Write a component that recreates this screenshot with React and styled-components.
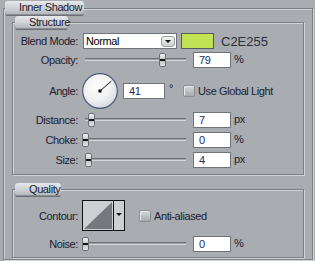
import styled, { createGlobalStyle } from 'styled-components'

const GlobalStyle = createGlobalStyle`
  html, body {
    margin: 0;
    background: #a9acb0;
  }

  body {
    width: 315px;
    height: 261px;
    overflow: hidden;
    font-family: "Liberation Sans", Arial, sans-serif;
    font-size: 11px;
    letter-spacing: -0.4px;
    color: #1a2030;
  }
`

const sliders = {
  opacity: { value: 79, max: 100 },
  distance: { value: 7, max: 120 },
  choke: { value: 0, max: 100 },
  size: { value: 4, max: 130 },
  noise: { value: 0, max: 100 },
}

const Dial = ({ angle }) => {
  const rad = (angle * Math.PI) / 180
  const x = 18 + 15 * Math.cos(rad)
  const y = 18 - 15 * Math.sin(rad)

  return (
    <DialBox width='36' height='36' viewBox='0 0 36 36'>
      <defs>
        <radialGradient id='dialFill' cx='40%' cy='35%' r='70%'>
          <stop offset='0' stopColor='#ffffff' />
          <stop offset='0.6' stopColor='#f0f0f0' />
          <stop offset='1' stopColor='#d4d6da' />
        </radialGradient>
      </defs>
      <circle cx='18' cy='18' r='17.3' fill='url(#dialFill)' stroke='#4c5d82' strokeWidth='1.2' />
      <line x1='18' y1='18' x2={x} y2={y} stroke='#111' strokeWidth='1' />
      <rect x='16.5' y='16.5' width='3' height='3' fill='#000' />
    </DialBox>
  )
}

const Slider = ({ value, max }) => (
  <SliderBox>
    <Track />
    <Thumb style={{ left: Math.round((value / max) * 98) }} />
  </SliderBox>
)

const NumberField = ({ value, unit }) => (
  <>
    <Field>{value}</Field>
    <Unit>{unit}</Unit>
  </>
)

const SliderRow = ({ label, name, unit, top }) => (
  <Row $top={top} $height={16}>
    <Label>{label}</Label>
    <Controls>
      <Slider {...sliders[name]} />
      <NumberField value={sliders[name].value} unit={unit} />
    </Controls>
  </Row>
)

export default function App () {
  return (
    <>
      <GlobalStyle />
      <Group $margin='1px 2px 0 3px'>
        <Tab $width={79} $offset={1} $height={14}>Inner Shadow</Tab>
        <GroupBody $padding='0 8px 1px 8px'>
          <Group $margin='1px 0 0 0'>
            <Tab $width={53} $offset={2} $height={13}>Structure</Tab>
            <GroupBody $padding='0 0 6px 0'>
              <Row $top={4} $height={16}>
                <Label>Blend Mode:</Label>
                <Controls>
                  <Select>
                    Normal
                    <SelectButton><Caret /></SelectButton>
                  </Select>
                  <Swatch />
                  <Hex>C2E255</Hex>
                </Controls>
              </Row>

              <SliderRow label='Opacity:' name='opacity' unit='%' top={3} />

              <Row $top={5} $height={36}>
                <Label>Angle:</Label>
                <Controls>
                  <Dial angle={41} />
                  <Field $width={42} $left={5}>41</Field>
                  <Degree>°</Degree>
                  <Check />
                  <CheckLabel>Use Global Light</CheckLabel>
                </Controls>
              </Row>

              <SliderRow label='Distance:' name='distance' unit='px' top={3} />
              <SliderRow label='Choke:' name='choke' unit='%' top={4} />
              <SliderRow label='Size:' name='size' unit='px' top={4} />
            </GroupBody>
          </Group>

          <Group $margin='8px 0 0 0'>
            <Tab $width={46} $offset={2} $height={13}>Quality</Tab>
            <GroupBody $padding='0 0 5px 0'>
              <Row $top={4} $height={31}>
                <Label>Contour:</Label>
                <Controls>
                  <ContourPicker>
                    <svg width='30' height='29' viewBox='0 0 30 29'>
                      <rect x='0' y='0' width='30' height='29' fill='#cdd0d3' />
                      <polygon points='1,28 29,1 29,28' fill='#75787d' />
                    </svg>
                    <ContourArrow><Caret /></ContourArrow>
                  </ContourPicker>
                  <Check $left={14} />
                  <CheckLabel>Anti-aliased</CheckLabel>
                </Controls>
              </Row>
              <SliderRow label='Noise:' name='noise' unit='%' top={5} />
            </GroupBody>
          </Group>
        </GroupBody>
      </Group>
    </>
  )
}

const Group = styled.fieldset`
  margin: ${(p) => p.$margin};
  padding: 0;
  min-inline-size: 0;
  border: 1px solid #7b7f86;
  box-shadow: 1px 1px 0 #d2d4d7, inset 1px 1px 0 #d2d4d7;
`

const Tab = styled.legend`
  box-sizing: border-box;
  width: ${(p) => p.$width}px;
  height: ${(p) => p.$height}px;
  margin-left: ${(p) => p.$offset}px;
  padding: 0 0 0 14px;
  line-height: ${(p) => p.$height - 1}px;
  white-space: nowrap;
  color: #1a2030;
  background: linear-gradient(#e6e8ea, #cdd0d3 55%, #afb2b6);
  border-radius: 3px 3px 2px 2px;
  box-shadow: inset 0 -1px 0 #8b8f95, 0 1px 0 #6d7177;
`

const GroupBody = styled.div`
  padding: ${(p) => p.$padding};
`

const Row = styled.div`
  display: grid;
  grid-template-columns: 65px auto;
  column-gap: 4px;
  align-items: center;
  height: ${(p) => p.$height}px;
  margin-top: ${(p) => p.$top}px;
`

const Label = styled.div`
  text-align: right;
  white-space: nowrap;
`

const Controls = styled.div`
  display: flex;
  align-items: center;
  height: 100%;
`

const Select = styled.div`
  box-sizing: border-box;
  display: flex;
  align-items: center;
  justify-content: space-between;
  width: 94px;
  height: 16px;
  margin-left: 1px;
  padding: 0 1px 0 2px;
  background: #fff;
  border: 1px solid #6f737a;
  color: #000;
`

const SelectButton = styled.div`
  display: flex;
  align-items: center;
  justify-content: center;
  width: 14px;
  height: 11px;
  border-radius: 3px;
  background: linear-gradient(#f4f4f4, #cdcfd2);
  border: 1px solid #9a9ea3;
  box-sizing: border-box;
`

const Caret = styled.span`
  width: 0;
  height: 0;
  border-left: 3px solid transparent;
  border-right: 3px solid transparent;
  border-top: 3px solid #111;
`

const Swatch = styled.div`
  box-sizing: border-box;
  width: 33px;
  height: 16px;
  margin-left: 4px;
  background: #c2e255;
  border: 1px solid #555a62;
`

const Hex = styled.div`
  margin-left: 7px;
  font-size: 13px;
  letter-spacing: 0;
  color: #2b303a;
`

const SliderBox = styled.div`
  position: relative;
  width: 104px;
  height: 16px;
`

const Track = styled.div`
  position: absolute;
  left: 3px;
  right: 0;
  top: 6px;
  height: 3px;
  box-sizing: border-box;
  background: #a0a3a7;
  border-top: 1px solid #6e7278;
  border-bottom: 1px solid #d4d6d9;
`

const Thumb = styled.div`
  position: absolute;
  top: 1px;
  width: 7px;
  height: 14px;
  box-sizing: border-box;
  border: 1px solid #6b6f74;
  border-radius: 2px;
  background: linear-gradient(
    #f4f4f4,
    #cfd0d2 38%,
    #151515 38%,
    #151515 58%,
    #c4c5c7 58%,
    #e6e6e6
  );
`

const Field = styled.div`
  box-sizing: border-box;
  width: ${(p) => p.$width || 38}px;
  height: 16px;
  margin-left: ${(p) => p.$left ?? 7}px;
  padding-left: 5px;
  line-height: 14px;
  background: #fff;
  border: 1px solid #6f737a;
  color: #252a5c;
`

const Unit = styled.div`
  margin-left: 3px;
  margin-bottom: 3px;
`

const DialBox = styled.svg`
  display: block;
`

const Degree = styled.div`
  align-self: flex-start;
  margin: 9px 0 0 4px;
`

const Check = styled.div`
  box-sizing: border-box;
  width: 12px;
  height: 12px;
  margin-left: ${(p) => p.$left ?? 10}px;
  border: 1px solid #8a8e93;
  border-radius: 2px;
  background: linear-gradient(#d6d8db, #a7aaae);
  box-shadow: inset 1px 1px 0 #e9eaec;
`

const CheckLabel = styled.div`
  margin-left: 3px;
  white-space: nowrap;
`

const ContourPicker = styled.div`
  display: flex;
  width: 43px;
  height: 31px;
  box-sizing: border-box;
  border: 1px solid #111;
  background: #cdd0d3;

  svg {
    display: block;
    border-right: 1px solid #111;
  }
`

const ContourArrow = styled.div`
  flex: 1;
  display: flex;
  justify-content: center;
  padding-top: 12px;
`
